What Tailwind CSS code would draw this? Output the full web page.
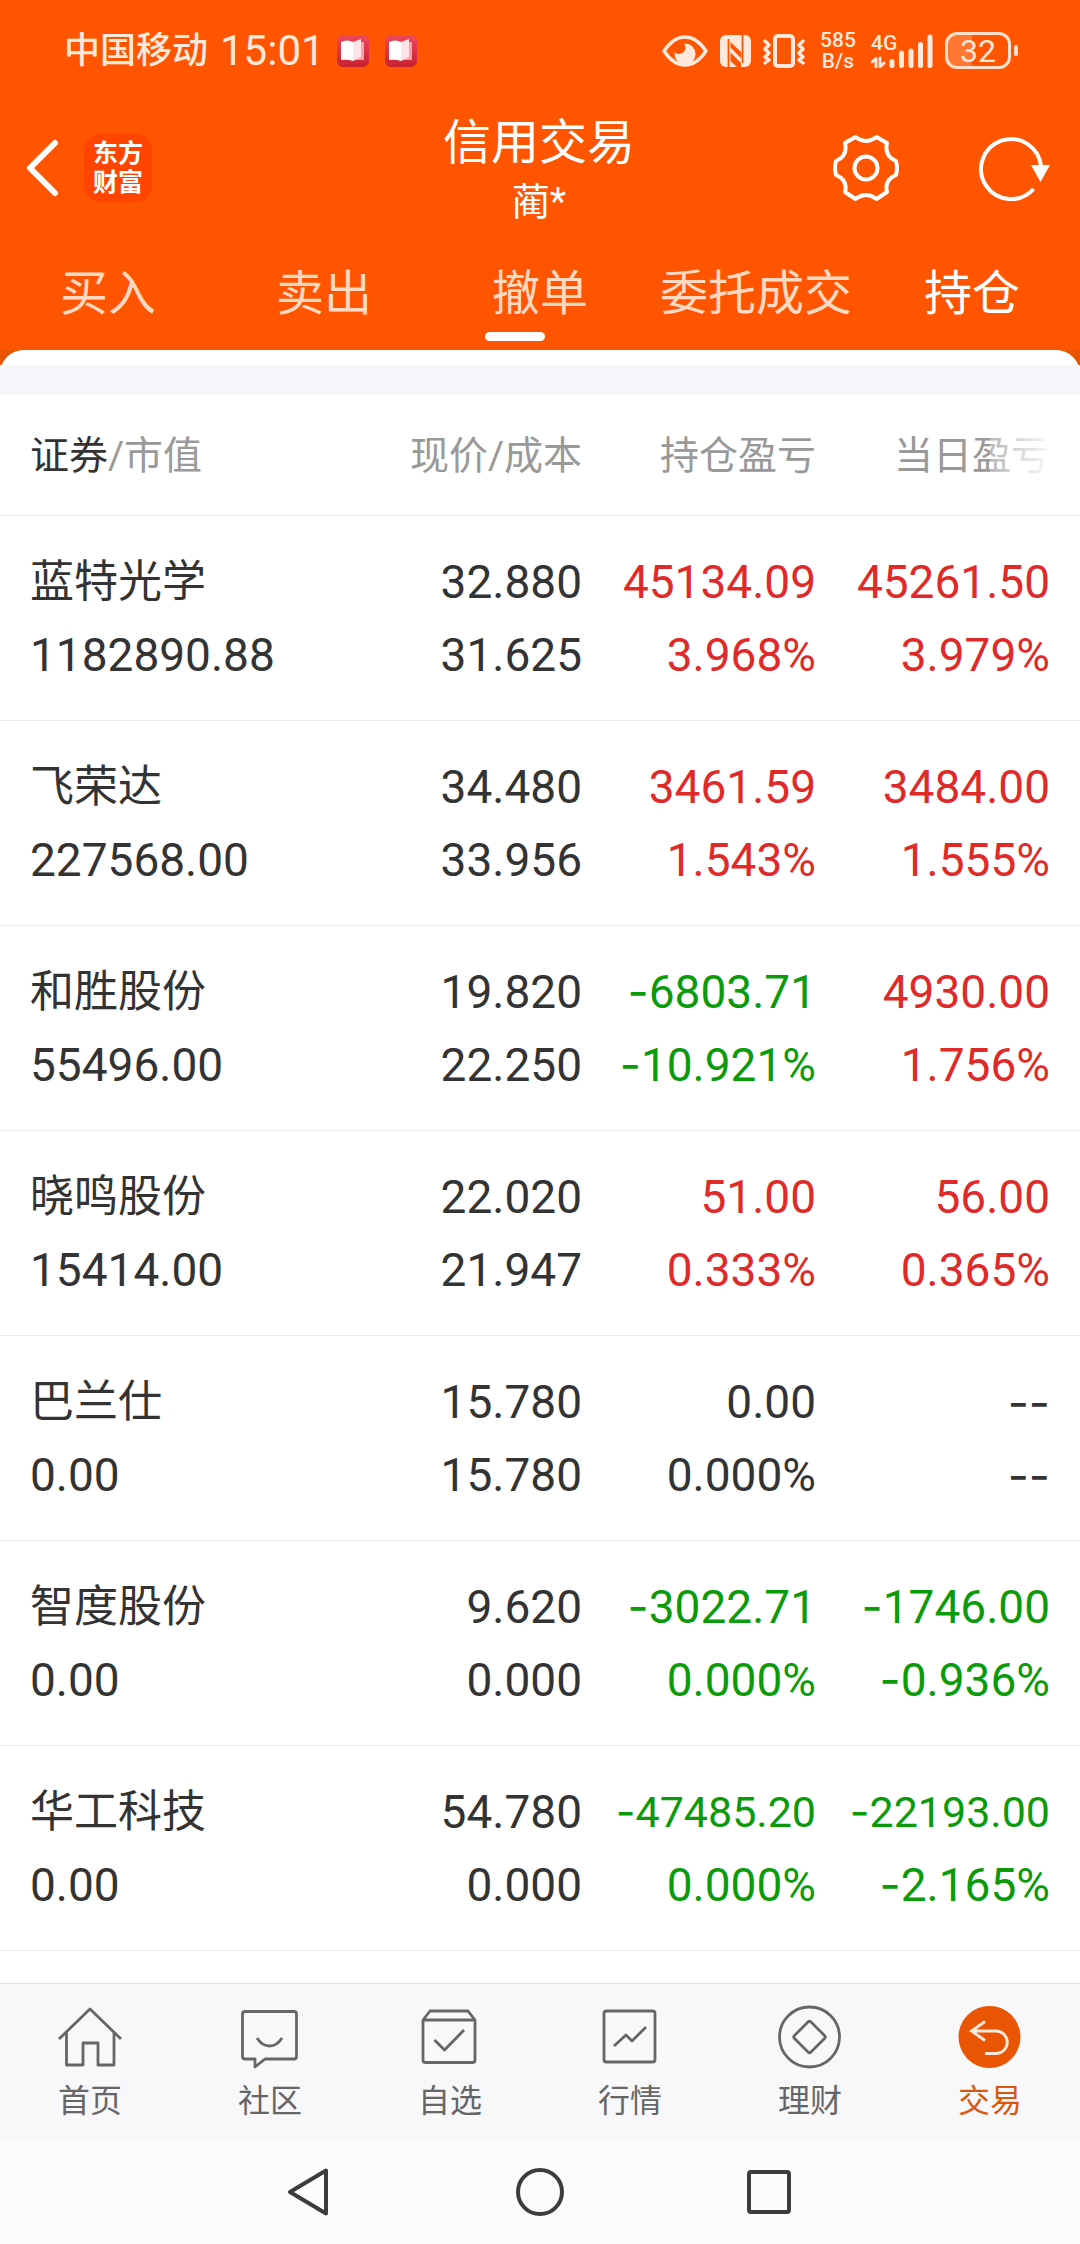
<!DOCTYPE html>
<html lang="zh-CN">
<head>
    <meta charset="UTF-8">
    <meta name="viewport" content="width=device-width, initial-scale=1.0">
    <title>信用交易 - 持仓</title>
    <script src="https://cdn.jsdelivr.net/npm/@tailwindcss/browser@4"></script>
</head>
<body class="flex min-h-screen flex-col bg-white font-[Roboto,'Noto_Sans_CJK_SC',sans-serif] text-[#333333]">
    <header class="bg-[#ff5500] text-white">
        <!-- Status bar -->
        <div class="flex h-[100px] items-center justify-between pt-px pl-16 pr-[62px] font-medium text-[#ffe9dd]">
            <div class="flex items-center">
                <span class="text-[36px] leading-[40px]">中国移动</span>
                <span class="ml-3 text-[42px] leading-[40px] font-normal">15:01</span>
                <svg class="ml-3 size-8" viewBox="0 0 32 32">
                    <defs>
                        <linearGradient id="book" x1="0" y1="0" x2="0" y2="1">
                            <stop offset="0" stop-color="#ec4a5c"/>
                            <stop offset="1" stop-color="#c9202f"/>
                        </linearGradient>
                    </defs>
                    <rect width="32" height="32" rx="6" fill="url(#book)"/>
                    <path d="M20 7h7v18H16z" fill="#f5a3ac"/>
                    <path d="M4 7q6-3 12 0v19q-5-2-12-1z" fill="#fff"/>
                    <path d="M16 7l8-3v18l-8 4z" fill="#ffe3e7"/>
                </svg>
                <svg class="ml-4 size-8" viewBox="0 0 32 32">
                    <rect width="32" height="32" rx="6" fill="url(#book)"/>
                    <path d="M20 7h7v18H16z" fill="#f5a3ac"/>
                    <path d="M4 7q6-3 12 0v19q-5-2-12-1z" fill="#fff"/>
                    <path d="M16 7l8-3v18l-8 4z" fill="#ffe3e7"/>
                </svg>
            </div>
            <div class="flex items-center gap-3">
                <svg class="h-8 w-[46px]" viewBox="0 0 46 32">
                    <circle cx="23" cy="19" r="10.500" fill="currentColor"/>
                    <circle cx="17" cy="12.500" r="6.500" fill="#ff5500"/>
                    <path d="M2 16C8 7 15 2 23 2s15 5 21 14c-6 9-13 14-21 14S8 25 2 16z" fill="none" stroke="currentColor" stroke-width="3.400" stroke-linejoin="round"/>
                </svg>
                <svg class="h-8 w-[31px]" viewBox="0 0 31 32">
                    <rect width="31" height="32" rx="6" fill="currentColor"/>
                    <path d="M10.500 7L21 17v6L10.500 12.500zM10.500 17.500L21 28v4h-4l-6.500-6z" fill="#ff5500"/>
                    <path d="M8.500 4v28M22.500 0v28" stroke="#ff5500" stroke-width="1.800"/>
                </svg>
                <svg class="h-[34px] w-[42px]" viewBox="0 0 42 34" fill="none" stroke="currentColor" stroke-width="3.400" stroke-linecap="round" stroke-linejoin="round">
                    <rect x="12" y="2" width="18" height="30" rx="3" stroke-width="4"/>
                    <path d="M2 7l4 4-4 4 4 4-4 4 4 3-4 3M40 7l-4 4 4 4-4 4 4 4-4 3 4 3"/>
                </svg>
                <div class="flex w-[42px] flex-col text-center text-[21px] leading-[21px]">
                    <span>585</span>
                    <span>B/s</span>
                </div>
                <div class="relative h-[34px] w-[62px]">
                    <span class="absolute -top-px left-0 text-[21px] leading-[21px]">4G</span>
                    <svg class="size-full" viewBox="0 0 62 34" fill="none" stroke="currentColor" stroke-linecap="round">
                        <path d="M21 27.500v4M30.500 19v12.500M40 17v14.500M49.500 10.500v21M59 3v28.500" stroke-width="5"/>
                        <path d="M1 28l4-3.500V33M9 24v9l4-4" stroke-width="2.800" stroke-linejoin="round"/>
                    </svg>
                </div>
                <div class="flex items-center gap-[3px]">
                    <div class="flex h-[37px] w-[66px] items-center justify-center rounded-xl border-3 border-[#ffe0cc] bg-linear-to-r from-white/20 from-40% to-transparent to-40% text-[32px] leading-none font-normal">32</div>
                    <div class="h-[11px] w-1 rounded-sm bg-[#ffe0cc]"></div>
                </div>
            </div>
        </div>

        <!-- Title bar -->
        <div class="grid h-[136px] grid-cols-[1fr_auto_1fr] items-center pl-6 pr-[30px]">
            <div class="flex items-center gap-6">
                <button type="button" aria-label="返回">
                    <svg class="h-[60px] w-9" viewBox="0 0 36 60" fill="none" stroke="currentColor" stroke-width="6" stroke-linecap="round" stroke-linejoin="round">
                        <path d="M31 5L6 30l25 25"/>
                    </svg>
                </button>
                <a href="#" class="flex size-[68px] items-center justify-center rounded-2xl bg-[#ff4500] text-center text-[25px] leading-[29px] font-bold">东方<br>财富</a>
            </div>
            <div class="pt-2 pl-1 text-center">
                <h1 class="text-[48px] leading-[60px]">信用交易</h1>
                <p class="text-[38px] leading-[58px]">蔺*</p>
            </div>
            <div class="flex items-center justify-end gap-[78px]">
                <button type="button" aria-label="设置">
                    <svg class="size-[68px]" viewBox="0 0 68 68" fill="none" stroke="currentColor" stroke-width="4" stroke-linejoin="round">
                        <path d="M23.500 3Q34 11 44.500 3L55 9Q52 22 64 27Q66 34 64 41Q52 46 55 58L44.500 65Q34 57 23.500 65L13 58Q16 46 4 41Q2 34 4 27Q16 22 13 9Z"/>
                        <circle cx="34" cy="34" r="11.500"/>
                    </svg>
                </button>
                <button type="button" aria-label="刷新">
                    <svg class="h-[68px] w-[72px]" viewBox="0 0 72 68" fill="none" stroke="currentColor" stroke-width="4">
                        <path d="M55.500 55A30 30 0 1 1 63 33"/>
                        <path d="M53 31h19l-9.500 17z" fill="currentColor" stroke="none"/>
                    </svg>
                </button>
            </div>
        </div>

        <!-- Tabs -->
        <nav class="grid h-[114px] grid-cols-5 text-center text-[48px] leading-[116px] text-[#ffd9c2]">
            <a href="#">买入</a>
            <a href="#">卖出</a>
            <a href="#" class="relative">撤单<span class="absolute top-[96px] left-[53px] h-[9px] w-[60px] rounded-full bg-white"></span></a>
            <a href="#">委托成交</a>
            <a href="#" class="text-white">持仓</a>
        </nav>
    </header>

    <main class="flex-1">
        <div class="h-[15px] overflow-hidden bg-[#e85400]">
            <div class="h-8 rounded-t-[24px] bg-white"></div>
        </div>
        <div class="h-[30px] bg-[#f6f7fa]"></div>

        <table class="w-full table-fixed">
            <colgroup>
                <col>
                <col class="w-[234px]">
                <col class="w-[234px]">
                <col class="w-[264px]">
            </colgroup>
            <thead>
                <tr class="h-[120px] border-b border-[#ebebeb] text-right text-[39px] leading-[60px] text-[#999999]">
                    <th class="pt-[3px] pl-[30px] text-left font-normal"><span class="text-[#333333]">证券</span>/市值</th>
                    <th class="pt-[3px] font-normal">现价/成本</th>
                    <th class="pt-[3px] font-normal">持仓盈亏</th>
                    <th class="relative pt-[3px] pr-[30px] font-normal">当日盈亏<span class="absolute inset-y-4 right-[30px] w-[60px] bg-linear-to-r from-white/30 to-white/95"></span></th>
                </tr>
            </thead>
            <tbody class="text-right text-[46px] leading-[73px]">
                <tr class="border-b border-[#ebebeb]">
                    <td class="pt-[30px] pb-7 pl-[30px] text-left"><div class="text-[44px]">蓝特光学</div>1182890.88</td>
                    <td class="pt-[30px] pb-7">32.880<br>31.625</td>
                    <td class="pt-[30px] pb-7 text-[#e02a2a]">45134.09<br>3.968%</td>
                    <td class="pt-[30px] pb-7 pr-[30px] text-[#e02a2a]">45261.50<br>3.979%</td>
                </tr>
                <tr class="border-b border-[#ebebeb]">
                    <td class="pt-[30px] pb-7 pl-[30px] text-left"><div class="text-[44px]">飞荣达</div>227568.00</td>
                    <td class="pt-[30px] pb-7">34.480<br>33.956</td>
                    <td class="pt-[30px] pb-7 text-[#e02a2a]">3461.59<br>1.543%</td>
                    <td class="pt-[30px] pb-7 pr-[30px] text-[#e02a2a]">3484.00<br>1.555%</td>
                </tr>
                <tr class="border-b border-[#ebebeb]">
                    <td class="pt-[30px] pb-7 pl-[30px] text-left"><div class="text-[44px]">和胜股份</div>55496.00</td>
                    <td class="pt-[30px] pb-7">19.820<br>22.250</td>
                    <td class="pt-[30px] pb-7 text-[#0a9a0a]"><span class="font-[Inter] leading-none">-</span>6803.71<br><span class="font-[Inter] leading-none">-</span>10.921%</td>
                    <td class="pt-[30px] pb-7 pr-[30px] text-[#e02a2a]">4930.00<br>1.756%</td>
                </tr>
                <tr class="border-b border-[#ebebeb]">
                    <td class="pt-[30px] pb-7 pl-[30px] text-left"><div class="text-[44px]">晓鸣股份</div>15414.00</td>
                    <td class="pt-[30px] pb-7">22.020<br>21.947</td>
                    <td class="pt-[30px] pb-7 text-[#e02a2a]">51.00<br>0.333%</td>
                    <td class="pt-[30px] pb-7 pr-[30px] text-[#e02a2a]">56.00<br>0.365%</td>
                </tr>
                <tr class="border-b border-[#ebebeb]">
                    <td class="pt-[30px] pb-7 pl-[30px] text-left"><div class="text-[44px]">巴兰仕</div>0.00</td>
                    <td class="pt-[30px] pb-7">15.780<br>15.780</td>
                    <td class="pt-[30px] pb-7">0.00<br>0.000%</td>
                    <td class="pt-[30px] pb-7 pr-[30px] font-[Inter]">--<br>--</td>
                </tr>
                <tr class="border-b border-[#ebebeb]">
                    <td class="pt-[30px] pb-7 pl-[30px] text-left"><div class="text-[44px]">智度股份</div>0.00</td>
                    <td class="pt-[30px] pb-7">9.620<br>0.000</td>
                    <td class="pt-[30px] pb-7 text-[#0a9a0a]"><span class="font-[Inter] leading-none">-</span>3022.71<br>0.000%</td>
                    <td class="pt-[30px] pb-7 pr-[30px] text-[#0a9a0a]"><span class="font-[Inter] leading-none">-</span>1746.00<br><span class="font-[Inter] leading-none">-</span>0.936%</td>
                </tr>
                <tr class="border-b border-[#ebebeb]">
                    <td class="pt-[30px] pb-7 pl-[30px] text-left"><div class="text-[44px]">华工科技</div>0.00</td>
                    <td class="pt-[30px] pb-7">54.780<br>0.000</td>
                    <td class="pt-[30px] pb-7 text-[#0a9a0a]"><div class="text-[43px]"><span class="font-[Inter] leading-none">-</span>47485.20</div>0.000%</td>
                    <td class="pt-[30px] pb-7 pr-[30px] text-[#0a9a0a]"><div class="text-[43px]"><span class="font-[Inter] leading-none">-</span>22193.00</div><span class="font-[Inter] leading-none">-</span>2.165%</td>
                </tr>
            </tbody>
        </table>
    </main>

    <!-- Bottom navigation -->
    <nav class="grid h-[157px] grid-cols-6 border-t border-[#dfe0e2] bg-[#f8f8fa] pt-[21px] text-[32px] leading-[64px] text-[#666666]">
        <a href="#" class="flex flex-col items-center">
            <svg class="size-16" viewBox="0 0 64 64" fill="none" stroke="currentColor" stroke-width="2.800" stroke-linejoin="round">
                <path d="M1 34L32 4l31 30M8.500 28v32H25V38h15v22h16V28"/>
            </svg>
            首页
        </a>
        <a href="#" class="flex flex-col items-center">
            <svg class="size-16" viewBox="0 0 64 64" fill="none" stroke="currentColor" stroke-width="2.800" stroke-linejoin="round">
                <path d="M7 6.500h49q2.500 0 2.500 2.500v42.500q0 2.500-2.500 2.500H27l-10 8v-8H7q-2.500 0-2.500-2.500V9q0-2.500 2.500-2.500z"/>
                <path d="M19 33q5 8 12.500 8T44 33"/>
            </svg>
            社区
        </a>
        <a href="#" class="flex flex-col items-center">
            <svg class="size-16" viewBox="0 0 64 64" fill="none" stroke="currentColor" stroke-width="2.800" stroke-linejoin="round">
                <path d="M5 15l7-9h38l7 9v40q0 2.500-2.500 2.500h-47Q5 57.500 5 55zM5 15h52M16.500 35l10 10L46 25"/>
            </svg>
            自选
        </a>
        <a href="#" class="flex flex-col items-center">
            <svg class="size-16" viewBox="0 0 64 64" fill="none" stroke="currentColor" stroke-width="2.800" stroke-linejoin="round">
                <rect x="6" y="6" width="51" height="51" rx="2.500"/>
                <path d="M16 41l12-11 6 6 14-14"/>
            </svg>
            行情
        </a>
        <a href="#" class="flex flex-col items-center">
            <svg class="size-16" viewBox="0 0 64 64" fill="none" stroke="currentColor" stroke-width="2.800" stroke-linejoin="round">
                <circle cx="31.500" cy="32" r="30"/>
                <path d="M30 17q1.500-1.500 3 0l13.500 13.500q1.500 1.500 0 3L33 47q-1.500 1.500-3 0L16.500 33.500q-1.500-1.500 0-3z"/>
            </svg>
            理财
        </a>
        <a href="#" class="flex flex-col items-center text-[#d9570f]">
            <svg class="size-16" viewBox="0 0 64 64" fill="none" stroke="#ffe9dd" stroke-width="2.800">
                <circle cx="31.500" cy="32" r="31" fill="#ea5504" stroke="none"/>
                <path d="M27 16.500L13.500 26 27 35.500M13.500 26H38a11 11 0 0 1 0 22.500H27"/>
            </svg>
            交易
        </a>
    </nav>

    <!-- System keys -->
    <div class="flex h-[104px] items-center justify-center gap-[183px] bg-[#fcfcfc] text-[#3c3c3c]">
        <button type="button" aria-label="后退">
            <svg class="size-12" viewBox="0 0 48 48" fill="none" stroke="currentColor" stroke-width="4" stroke-linejoin="round">
                <path d="M5 24L41 2.500v43z"/>
            </svg>
        </button>
        <button type="button" aria-label="主屏幕">
            <svg class="size-12" viewBox="0 0 48 48" fill="none" stroke="currentColor" stroke-width="4">
                <circle cx="24" cy="24" r="22"/>
            </svg>
        </button>
        <button type="button" aria-label="最近任务">
            <svg class="size-12" viewBox="0 0 48 48" fill="none" stroke="currentColor" stroke-width="4">
                <rect x="2" y="4" width="40" height="40" rx="2"/>
            </svg>
        </button>
    </div>
</body>
</html>
